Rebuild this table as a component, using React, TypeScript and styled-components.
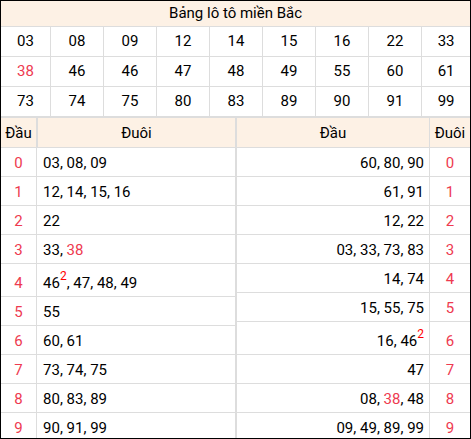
import styled, { createGlobalStyle } from 'styled-components'

const GlobalStyle = createGlobalStyle`
  * { box-sizing: border-box; }
  body {
    margin: 0;
    font-family: Roboto, "Liberation Sans", Arial, sans-serif;
    color: #000;
  }
`

const HOT = '38'
const LINE = '#dddddd'
const PEACH = '#fdf1e5'
const RED = '#ee3a50'

const results = [
  '03', '08', '09', '12', '14', '15', '16', '22', '33',
  '38', '46', '46', '47', '48', '49', '55', '60', '61',
  '73', '74', '75', '80', '83', '89', '90', '91', '99',
]

const Frame = styled.div`
  width: 471px;
  height: 439px;
  border: 1px solid #000;
  overflow: hidden;
  font-size: 15px;
`

const Table = styled.table<{ $w: number }>`
  width: ${(p) => p.$w}px;
  border-collapse: separate;
  border-spacing: 0;
  table-layout: fixed;
`

const Title = styled.th`
  background: ${PEACH};
  font-weight: normal;
  line-height: 18px;
  padding: 3px 0 4px;
  border-bottom: 1px solid ${LINE};
`

const NumCell = styled.td<{ $hot?: boolean }>`
  text-align: center;
  line-height: 18px;
  padding: 5px 0 6px;
  color: ${(p) => (p.$hot ? RED : '#000')};
  border-right: 1px solid ${LINE};
  border-bottom: 1px solid ${LINE};
  &:last-child {
    border-right: 0;
  }
`

const Split = styled.div`
  display: flex;
`

const HeadCell = styled.th<{ $edge?: boolean }>`
  background: ${PEACH};
  font-weight: normal;
  line-height: 18px;
  padding: 6px 0 5px;
  text-align: center;
  white-space: nowrap;
  border-top: 1px solid ${LINE};
  border-bottom: 1px solid ${LINE};
  border-right: 1px solid ${LINE};
  border-left: ${(p) => (p.$edge ? `1px solid ${LINE}` : '0')};
  &:last-child {
    border-right: ${(p) => (p.$edge ? `1px solid ${LINE}` : '0')};
  }
`

const Row = styled.tr`
  vertical-align: baseline;
`

const DigitCell = styled.td<{ $last?: boolean }>`
  color: ${RED};
  text-align: center;
  line-height: 18px;
  padding: 6px 0 4px;
  border-bottom: 1px solid ${LINE};
  border-right: ${(p) => (p.$last ? '0' : `1px solid ${LINE}`)};
`

const ListCell = styled.td<{ $align: 'left' | 'right'; $edge?: boolean }>`
  text-align: ${(p) => p.$align};
  line-height: 18px;
  padding: ${(p) => (p.$align === 'left' ? '6px 4px 4px 6px' : '6px 5px 4px 4px')};
  white-space: nowrap;
  border-bottom: 1px solid ${LINE};
  border-right: 1px solid ${LINE};
  border-left: ${(p) => (p.$edge ? `1px solid ${LINE}` : '0')};
`

const Hot = styled.span`
  color: ${RED};
`

const Count = styled.sup`
  color: #ff0000;
  font-size: 12px;
  line-height: 12px;
  vertical-align: 8px;
`

// unique numbers matching a digit, with how many times they came
function pick(test: (n: string) => boolean) {
  const seen: { n: string; c: number }[] = []
  results.forEach((n) => {
    if (!test(n)) return
    const hit = seen.find((s) => s.n === n)
    if (hit) hit.c += 1
    else seen.push({ n, c: 1 })
  })
  return seen.sort((a, b) => a.n.localeCompare(b.n))
}

function NumList({ items }: { items: { n: string; c: number }[] }) {
  return (
    <>
      {items.map((it, i) => (
        <span key={it.n}>
          {i > 0 && ', '}
          {it.n === HOT ? <Hot>{it.n}</Hot> : it.n}
          {it.c > 1 && <Count>{it.c}</Count>}
        </span>
      ))}
    </>
  )
}

const digits = ['0', '1', '2', '3', '4', '5', '6', '7', '8', '9']
const topCols = [50, 53, 53, 53, 53, 53, 53, 53, 48]

export default function App() {
  const rows = [0, 1, 2].map((r) => results.slice(r * 9, r * 9 + 9))
  return (
    <>
      <GlobalStyle />
      <Frame>
        <Table $w={469}>
          <colgroup>
            {topCols.map((w, i) => (
              <col key={i} style={{ width: w }} />
            ))}
          </colgroup>
          <thead>
            <tr>
              <Title colSpan={9}>Bảng lô tô miền Bắc</Title>
            </tr>
          </thead>
          <tbody>
            {rows.map((row, r) => (
              <tr key={r}>
                {row.map((n, i) => (
                  <NumCell key={i} $hot={n === HOT}>
                    {n}
                  </NumCell>
                ))}
              </tr>
            ))}
          </tbody>
        </Table>
        <Split>
          <Table $w={235}>
            <colgroup>
              <col style={{ width: 36 }} />
              <col style={{ width: 199 }} />
            </colgroup>
            <thead>
              <tr>
                <HeadCell>Đầu</HeadCell>
                <HeadCell $edge>Đuôi</HeadCell>
              </tr>
            </thead>
            <tbody>
              {digits.map((d) => (
                <Row key={d}>
                  <DigitCell>{d}</DigitCell>
                  <ListCell $align="left">
                    <NumList items={pick((n) => n[0] === d)} />
                  </ListCell>
                </Row>
              ))}
            </tbody>
          </Table>
          <Table $w={234}>
            <colgroup>
              <col style={{ width: 194 }} />
              <col style={{ width: 40 }} />
            </colgroup>
            <thead>
              <tr>
                <HeadCell $edge>Đầu</HeadCell>
                <HeadCell>Đuôi</HeadCell>
              </tr>
            </thead>
            <tbody>
              {digits.map((d) => (
                <Row key={d}>
                  <ListCell $align="right" $edge>
                    <NumList items={pick((n) => n[1] === d)} />
                  </ListCell>
                  <DigitCell $last>{d}</DigitCell>
                </Row>
              ))}
            </tbody>
          </Table>
        </Split>
      </Frame>
    </>
  )
}
